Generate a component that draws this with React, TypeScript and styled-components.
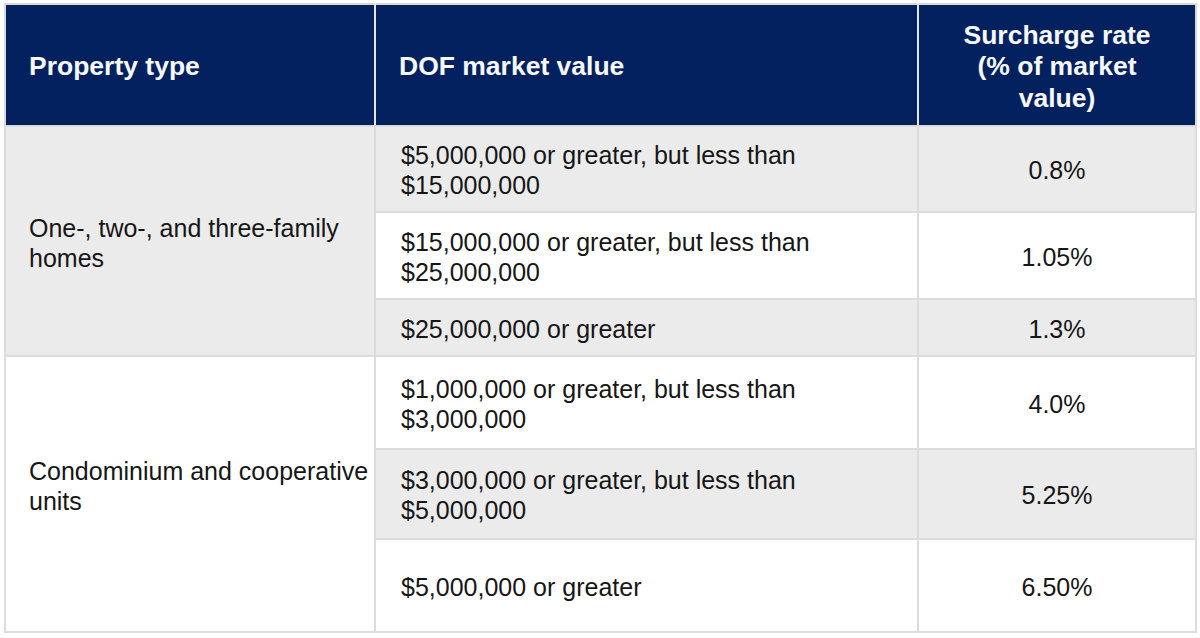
import React from "react";
import styled, { createGlobalStyle } from "styled-components";

const GlobalStyle = createGlobalStyle`
  html, body {
    margin: 0;
    padding: 0;
    background: #ffffff;
  }
  body {
    font-family: "Liberation Sans", Arial, Helvetica, sans-serif;
  }
`;

type Row = {
  value: string[];
  rate: string;
  height: number;
  shaded: boolean;
};

type Group = {
  type: string[];
  shaded: boolean;
  lift: number;
  rows: Row[];
};

const groups: Group[] = [
  {
    type: ["One-, two-, and three-family", "homes"],
    shaded: true,
    lift: 0,
    rows: [
      { value: ["$5,000,000 or greater, but less than", "$15,000,000"], rate: "0.8%", height: 86, shaded: true },
      { value: ["$15,000,000 or greater, but less than", "$25,000,000"], rate: "1.05%", height: 87, shaded: false },
      { value: ["$25,000,000 or greater"], rate: "1.3%", height: 57, shaded: true },
    ],
  },
  {
    type: ["Condominium and cooperative", "units"],
    shaded: false,
    lift: 20,
    rows: [
      { value: ["$1,000,000 or greater, but less than", "$3,000,000"], rate: "4.0%", height: 93, shaded: false },
      { value: ["$3,000,000 or greater, but less than", "$5,000,000"], rate: "5.25%", height: 90, shaded: true },
      { value: ["$5,000,000 or greater"], rate: "6.50%", height: 93, shaded: false },
    ],
  },
];

export default function App() {
  return (
    <>
      <GlobalStyle />
      <Page>
        <Table>
          <colgroup>
            <col style={{ width: 370 }} />
            <col style={{ width: 543 }} />
            <col style={{ width: 278 }} />
          </colgroup>
          <thead>
            <HeadRow>
              <HeadCell>Property type</HeadCell>
              <HeadCell>DOF market value</HeadCell>
              <HeadCell $center>
                Surcharge rate
                <br />
                (% of market
                <br />
                value)
              </HeadCell>
            </HeadRow>
          </thead>
          <tbody>
            {groups.map((g) =>
              g.rows.map((r, i) => (
                <BodyRow key={g.type[0] + i} $height={r.height}>
                  {i === 0 && (
                    <TypeCell rowSpan={g.rows.length} $shaded={g.shaded} $lift={g.lift}>
                      {g.type.map((line) => (
                        <Line key={line}>{line}</Line>
                      ))}
                    </TypeCell>
                  )}
                  <ValueCell $shaded={r.shaded}>
                    {r.value.map((line) => (
                      <Line key={line}>{line}</Line>
                    ))}
                  </ValueCell>
                  <RateCell $shaded={r.shaded}>{r.rate}</RateCell>
                </BodyRow>
              ))
            )}
          </tbody>
        </Table>
      </Page>
    </>
  );
}

const Page = styled.div`
  width: 1200px;
  height: 638px;
  padding: 3px 0 0 4px;
  box-sizing: border-box;
  background: #ffffff;
`;

const Table = styled.table`
  width: 1192px;
  border-collapse: collapse;
  table-layout: fixed;
  border: 2px solid #d9d9d9;
`;

const HeadRow = styled.tr`
  height: 122px;
`;

const HeadCell = styled.th<{ $center?: boolean }>`
  background: #03215f;
  color: #f8f8fb;
  font-size: 26.5px;
  font-weight: bold;
  line-height: 31.5px;
  text-align: ${(p) => (p.$center ? "center" : "left")};
  vertical-align: middle;
  padding: 4px ${(p) => (p.$center ? "10px" : "20px")} 0 23px;
  border-right: 2px solid #e4e6ee;
  border-bottom: 2px solid #d9d9d9;

  &:last-child {
    border-right: none;
    padding-left: 10px;
  }
`;

const BodyRow = styled.tr<{ $height: number }>`
  height: ${(p) => p.$height}px;
`;

const Cell = styled.td<{ $shaded: boolean }>`
  background: ${(p) => (p.$shaded ? "#ebebeb" : "#ffffff")};
  color: #161616;
  font-size: 25px;
  line-height: 30px;
  vertical-align: middle;
  border: 2px solid #dcdcdc;
  padding-top: 3px;
`;

const TypeCell = styled(Cell)<{ $lift: number }>`
  padding: 3px 16px ${(p) => p.$lift}px 23px;
`;

const ValueCell = styled(Cell)`
  padding-left: 25px;
  padding-right: 16px;
`;

const RateCell = styled(Cell)`
  text-align: center;
  padding-left: 4px;
  padding-right: 4px;
`;

const Line = styled.div`
  white-space: nowrap;
`;
